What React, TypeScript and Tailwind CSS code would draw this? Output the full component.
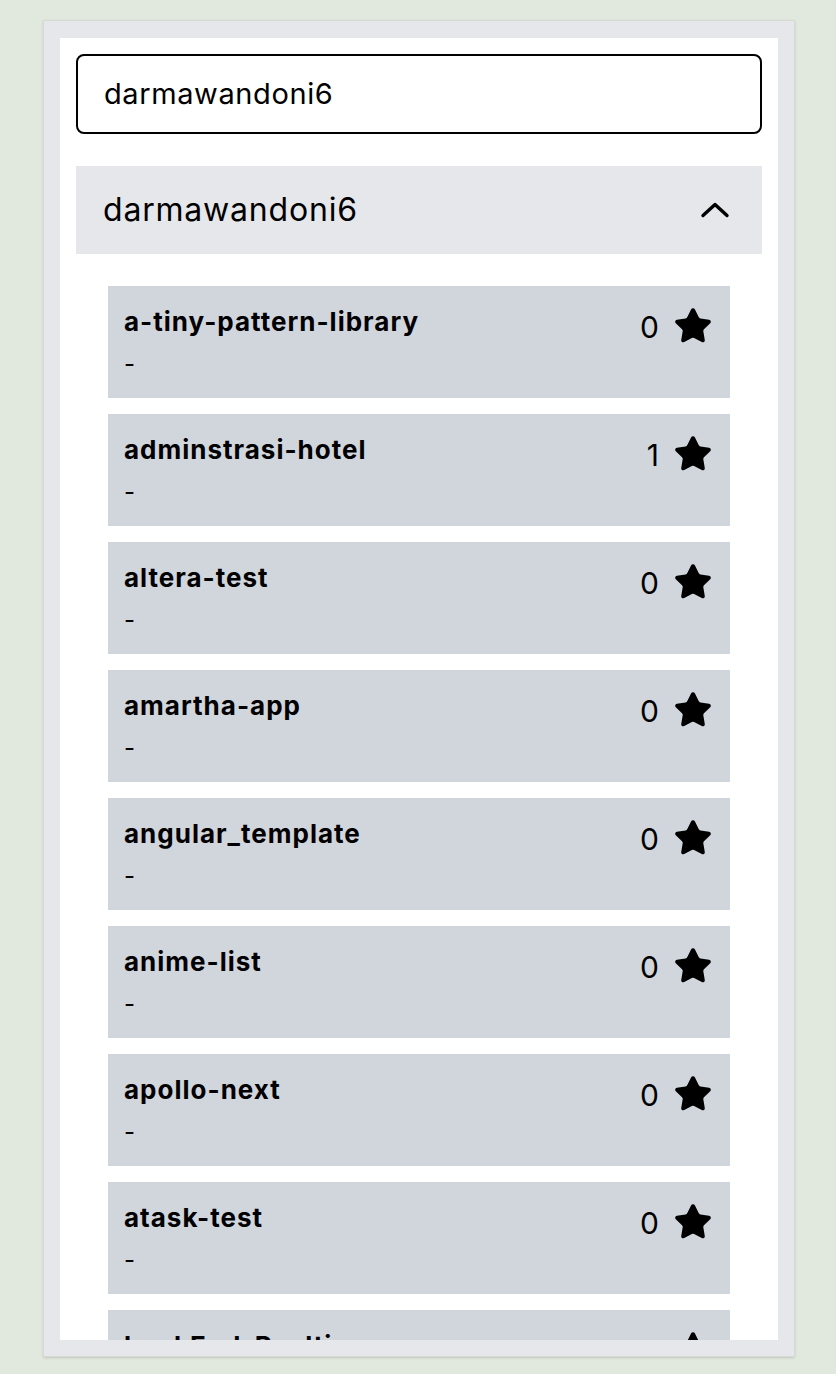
import { Star } from "lucide-react";

const repos = [
  { name: "a-tiny-pattern-library", stars: 0 },
  { name: "adminstrasi-hotel", stars: 1 },
  { name: "altera-test", stars: 0 },
  { name: "amartha-app", stars: 0 },
  { name: "angular_template", stars: 0 },
  { name: "anime-list", stars: 0 },
  { name: "apollo-next", stars: 0 },
  { name: "atask-test", stars: 0 },
  { name: "backEnd-Realtime", stars: 0 },
];

function ChevronUp() {
  return (
    <svg width="30" height="18" viewBox="0 0 30 18" fill="none">
      <path d="M3 14.5 L15 3.5 L27 14.5" stroke="black" strokeWidth="3.4" strokeLinecap="round" strokeLinejoin="round" />
    </svg>
  );
}

export default function App() {
  return (
    <div className="min-h-screen bg-[#e1e8dd] pt-5 pl-[43px]" style={{ fontFamily: "Inter, 'Noto Sans', sans-serif" }}>
      <div className="w-[752px] h-[1337px] border border-[#d6dad2] bg-gray-200 px-4 pt-[17px] pb-4 shadow-sm">
        <div className="h-full overflow-hidden bg-white px-4 pt-4">
          {/* Search */}
          <div className="h-[80px] rounded-lg border-2 border-black flex items-center pl-[26px]">
            <span className="text-[29px] tracking-[0.6px] text-black">darmawandoni6</span>
          </div>

          {/* User accordion */}
          <div className="mt-8 h-[88px] bg-gray-200 flex items-center justify-between pl-[27px] pr-8">
            <span className="text-[32px] tracking-[0.8px] text-black">darmawandoni6</span>
            <ChevronUp />
          </div>

          {/* Repositories */}
          <div className="mt-8 px-8 flex flex-col gap-4">
            {repos.map((repo) => (
              <div key={repo.name} className="h-[112px] shrink-0 bg-gray-300 flex justify-between pl-4 pr-[17px] pt-5">
                <div className="flex flex-col">
                  <span className="text-[26px] leading-8 font-bold tracking-[1px] text-black">{repo.name}</span>
                  <span className="mt-[10px] text-[24px] leading-8 text-black">-</span>
                </div>
                <div className="flex items-start gap-[14px]">
                  <span className="mt-[3px] text-[30px] leading-9 text-black">{repo.stars}</span>
                  <Star size={40} fill="black" strokeWidth={1.4} className="text-black" />
                </div>
              </div>
            ))}
          </div>
        </div>
      </div>
    </div>
  );
}
